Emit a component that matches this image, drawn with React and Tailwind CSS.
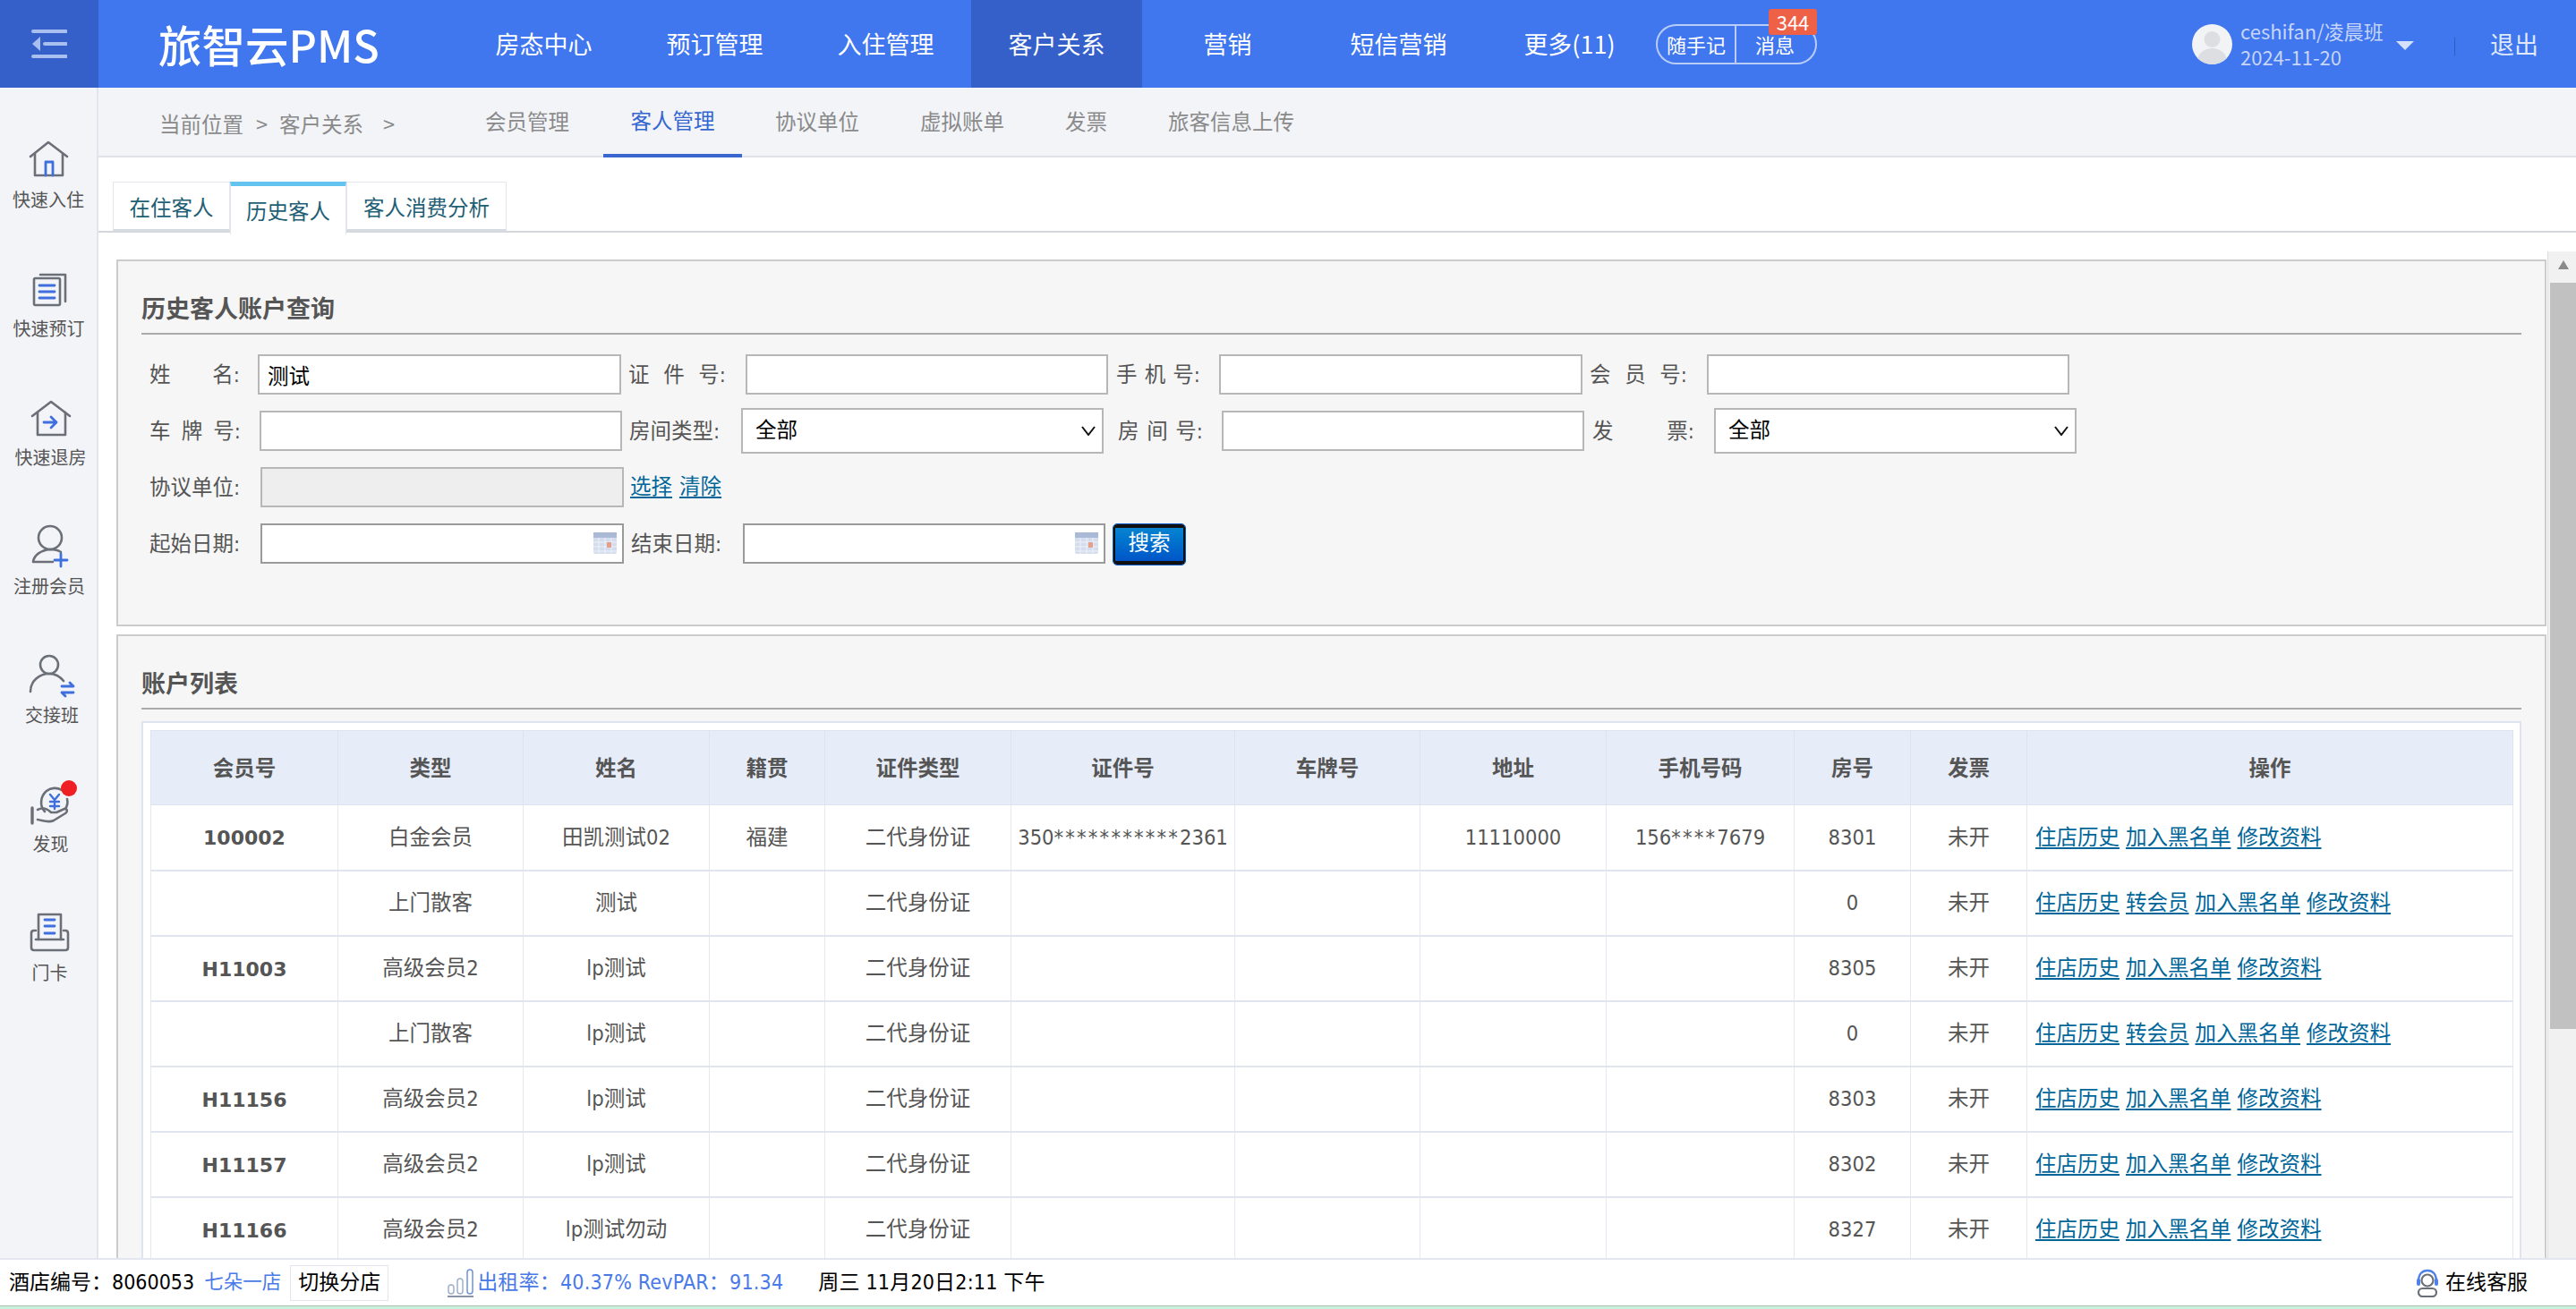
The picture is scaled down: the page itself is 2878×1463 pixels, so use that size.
import React from 'react';

const navItems = ['房态中心', '预订管理', '入住管理', '客户关系', '营销', '短信营销', '更多(11)'];

const stroke = { fill: 'none', stroke: '#6b7078', strokeWidth: 2.6, strokeLinejoin: 'round', strokeLinecap: 'round' };
const blue = { fill: 'none', stroke: '#3f6fdc', strokeWidth: 2.8, strokeLinecap: 'round', strokeLinejoin: 'round' };

const sideItems = [
  {
    label: '快速入住',
    labelClass: '',
    icon: (
      <>
        <path d="M8 25 L28 9 L49 25" {...stroke} />
        <path d="M13 22 V46 H44 V22" {...stroke} />
        <path d="M25 46 V31 H33 V46" {...blue} />
      </>
    ),
  },
  {
    label: '快速预订',
    labelClass: 'ml-[1px]',
    icon: (
      <>
        <path d="M19 13 H47 V43" {...stroke} />
        <rect x="12" y="17" width="29" height="30" rx="1.5" {...stroke} />
        <path d="M18 25 H35 M18 32 H35 M18 39 H35" {...blue} />
      </>
    ),
  },
  {
    label: '快速退房',
    labelClass: 'ml-[5px]',
    icon: (
      <>
        <path d="M10 27 L31 11 L52 27" {...stroke} />
        <path d="M16 23 V48 H47 V23" {...stroke} />
        <path d="M23 34 H37 M31 28 L37 34 L31 40" {...blue} />
      </>
    ),
  },
  {
    label: '注册会员',
    labelClass: 'ml-[2px]',
    icon: (
      <>
        <circle cx="30" cy="19" r="13" {...stroke} />
        <path d="M33 46 H11 C12 38 20 33 30 32 C35 32 39 33 42 35" {...stroke} />
        <path d="M42 37 V51 M35 44 H49" {...blue} />
      </>
    ),
  },
  {
    label: '交接班',
    labelClass: 'ml-[8px]',
    icon: (
      <>
        <circle cx="29" cy="17" r="10" {...stroke} />
        <path d="M8 47 C8 35 18 27 29 27 C35 27 41 30 45 35" {...stroke} />
        <path d="M43 41 H56 L52 37 M56 48 H43 L47 52" {...blue} />
      </>
    ),
  },
  {
    label: '发现',
    labelClass: 'ml-[5px]',
    icon: (
      <>
        <path d="M24 37 C18 31 19 20 26 14 C31 10 38 10 43 13 M49 23 C50 27 49 31 47 34" {...stroke} />
        <path d="M10 33 V50" {...stroke} strokeWidth="3.4" />
        <path d="M16 35 C22 32 27 34 31 38 H37 L46 34 C49 33 50 37 47 39 L34 47 C28 50 22 47 16 46" {...stroke} />
        <path d="M30 18 L35 24 L40 18 M30 26 H40 M30 31 H40 M35 24 V34" {...blue} strokeWidth="2.4" />
        <circle cx="51" cy="11" r="9" fill="#ee2024" />
      </>
    ),
  },
  {
    label: '门卡',
    labelClass: 'ml-[3px]',
    icon: (
      <>
        <path d="M17 36 V8 H42 V36" {...stroke} />
        <path d="M14 26 H12 C10 26 9 27 9 29 V45 C9 47 10 48 12 48 H47 C49 48 50 47 50 45 V29 C50 27 49 26 47 26 H45" {...stroke} />
        <path d="M14 36 H45" {...stroke} />
        <path d="M24 14 H35 M24 21 H35 M24 29 H35" {...blue} />
      </>
    ),
  },
];

const rows = [
  ['100002', '白金会员', '田凯测试02', '福建', '二代身份证', '350***********2361', '', '11110000', '156****7679', '8301', '未开', false],
  ['', '上门散客', '测试', '', '二代身份证', '', '', '', '', '0', '未开', true],
  ['H11003', '高级会员2', 'lp测试', '', '二代身份证', '', '', '', '', '8305', '未开', false],
  ['', '上门散客', 'lp测试', '', '二代身份证', '', '', '', '', '0', '未开', true],
  ['H11156', '高级会员2', 'lp测试', '', '二代身份证', '', '', '', '', '8303', '未开', false],
  ['H11157', '高级会员2', 'lp测试', '', '二代身份证', '', '', '', '', '8302', '未开', false],
  ['H11166', '高级会员2', 'lp测试勿动', '', '二代身份证', '', '', '', '', '8327', '未开', false],
];

const headers = ['会员号', '类型', '姓名', '籍贯', '证件类型', '证件号', '车牌号', '地址', '手机号码', '房号', '发票', '操作'];
const colWidths = [209, 207, 208, 129, 208, 250, 207, 208, 210, 130, 130, 543];

function Label({ parts, className }) {
  return (
    <div className={`flex justify-between shrink-0 pt-[2px] text-[23.5px] text-[#555] ${className}`}>
      {parts.map((p, i) => (
        <span key={i}>{p}</span>
      ))}
    </div>
  );
}

function TextInput({ className, value = '', disabled }) {
  return (
    <input
      readOnly
      disabled={disabled}
      value={value}
      className={`shrink-0 h-[45px] px-[9px] text-[23.5px] text-black border-2 border-[#b7b7b7] outline-none ${disabled ? 'bg-[#eeeeee]' : 'bg-white'} ${className}`}
    />
  );
}

function SelectBox({ className }) {
  return (
    <div className={`relative shrink-0 h-[51px] ${className}`}>
      <select className="w-full h-full appearance-none pl-[14px] text-[23.5px] text-black bg-white border-2 border-[#b7b7b7] rounded-none">
        <option>全部</option>
      </select>
      <svg viewBox="0 0 16 11" className="absolute right-[9px] top-[20px] w-[16px] h-[11px] pointer-events-none">
        <path d="M1 1 L8 10 L15 1" fill="none" stroke="#111" strokeWidth="2" />
      </svg>
    </div>
  );
}

function CalendarIcon() {
  return (
    <svg viewBox="0 0 26 24" className="absolute right-[8px] top-[10px] w-[26px] h-[24px]">
      <rect x="0" y="0" width="26" height="24" rx="2" fill="#d3dded" />
      <rect x="0" y="0" width="26" height="6" fill="#a9b9d6" />
      <path d="M0 11 H26 M0 16 H26 M0 21 H26 M6 6 V24 M13 6 V24 M20 6 V24" stroke="#eef2f8" strokeWidth="1" />
      <rect x="15" y="11" width="5" height="6" fill="#e5a08c" />
    </svg>
  );
}

function DateInput({ className }) {
  return (
    <div className={`relative shrink-0 ${className}`}>
      <input readOnly className="w-full h-[45px] bg-white border-2 border-[#9a9a9a] outline-none" />
      <CalendarIcon />
    </div>
  );
}

function PanelTitle({ children }) {
  return (
    <div className="h-[82px] flex items-end border-b-2 border-[#aaaaaa] pb-[8px]">
      <h2 className="text-[27px] leading-[36px] font-bold text-[#555]">{children}</h2>
    </div>
  );
}

function OpLink({ children }) {
  return (
    <a className="text-[#006699] underline decoration-2 underline-offset-[3px] cursor-pointer">{children}</a>
  );
}

// the masked ids show wider asterisks than the fallback font has
function Masked({ value }) {
  const parts = value.split(/(\*+)/);
  return parts.map((p, i) =>
    p.startsWith('*') ? <span key={i} className="tracking-[2.2px]">{p}</span> : <span key={i}>{p}</span>
  );
}

export default function App() {
  return (
    <div className="w-full h-[1463px] overflow-hidden flex flex-col bg-white [font-family:'DejaVu_Sans_Condensed','Noto_Sans_CJK_SC',sans-serif]">
      {/* top bar */}
      <header className="h-[98px] shrink-0 flex items-stretch bg-[#4076ee] [font-family:'Noto_Sans_CJK_SC',sans-serif]">
        <div className="w-[110px] shrink-0 bg-[#3560c9] flex items-center justify-center">
          <svg viewBox="0 0 40 32" className="w-[40px] h-[32px]">
            <path d="M2 2 H39 M15 16 H39 M2 30 H39" stroke="#a9bff0" strokeWidth="4" strokeLinecap="round" />
            <path d="M1 16 L10 8 V24 Z" fill="#a9bff0" />
          </svg>
        </div>
        <div className="w-[402px] shrink-0 flex items-center pl-[67px] text-white text-[48.5px] leading-none font-medium">旅智云PMS</div>
        {navItems.map((item, i) => (
          <div key={item} className={`w-[191px] shrink-0 flex items-center justify-center text-white text-[27px] ${i === 3 ? 'bg-[#3560c9]' : ''}`}>
            {item}
          </div>
        ))}
        <div className="flex items-center ml-[1px]">
          <div className="relative flex w-[180px] h-[45px] rounded-full border-2 border-[#b9cdf8] text-white text-[22px]">
            <div className="w-[88px] flex items-center justify-center border-r-2 border-[#b9cdf8]">随手记</div>
            <div className="flex-1 flex items-center justify-center pr-[2px]">消息</div>
            <span className="absolute right-[-2px] top-[-19px] w-[54px] h-[29px] rounded-[3px] bg-[#ee6146] text-white text-[22px] leading-[29px] text-center">344</span>
          </div>
        </div>
        <div className="flex items-center ml-[419px]">
          <div className="w-[45px] h-[45px] rounded-full bg-[#f2f3f5] overflow-hidden flex items-center justify-center">
            <svg viewBox="0 0 45 45" className="w-[45px] h-[45px]">
              <circle cx="22.5" cy="17" r="9" fill="#dcdee2" />
              <ellipse cx="22.5" cy="40" rx="16" ry="13" fill="#dcdee2" />
            </svg>
          </div>
          <div className="ml-[9px] w-[174px] text-[22px] leading-[29px] text-[#c6d5f9]">
            <div>ceshifan/凌晨班</div>
            <div>2024-11-20</div>
          </div>
          <svg viewBox="0 0 20 10" className="w-[20px] h-[10px] mt-[4px]">
            <path d="M0 0 H20 L10 10 Z" fill="#d5e0fb" />
          </svg>
          <div className="ml-[45px] w-[1px] h-[20px] mt-[6px] bg-[#2f5cc0]" />
          <div className="ml-[39px] text-[27px] text-[#dfe8fc]">退出</div>
        </div>
      </header>

      <div className="flex-1 min-h-0 flex">
        {/* left quick menu */}
        <aside className="w-[110px] shrink-0 bg-[#f2f4f8] border-r-2 border-[#e3e5ee] pt-[52px] [font-family:'Noto_Sans_CJK_SC',sans-serif]">
          {sideItems.map((item) => (
            <div key={item.label} className="h-[144px] flex flex-col items-center">
              <svg viewBox="0 0 60 56" className="w-[60px] h-[56px] shrink-0 ml-[4px]">
                {item.icon}
              </svg>
              <div className={`mt-[4px] text-[20px] leading-[26px] text-[#555] ${item.labelClass}`}>{item.label}</div>
            </div>
          ))}
        </aside>

        <main className="flex-1 min-w-0 flex flex-col">
          {/* breadcrumb + sub nav */}
          <div className="h-[78px] shrink-0 bg-[#f2f4f8] border-b-2 border-[#dfe2e8] flex items-stretch pl-[68px] text-[23.5px] text-[#8a8a8a] [font-family:'Noto_Sans_CJK_SC',sans-serif]">
            <div className="w-[330px] shrink-0 flex items-center pt-[5px]">
              <span>当前位置</span>
              <span className="ml-[14px]">&gt;</span>
              <span className="ml-[13px]">客户关系</span>
              <span className="ml-[22px]">&gt;</span>
            </div>
            <div className="flex items-center pb-[1px] w-[162px] justify-center">会员管理</div>
            <div className="flex items-center pb-[1px] w-[155px] justify-center text-[#3566d0] border-b-[4px] border-[#3a66cf] mb-[-2px] mr-[3px] ml-[4px]">客人管理</div>
            <div className="flex items-center pb-[1px] w-[162px] justify-center">协议单位</div>
            <div className="flex items-center pb-[1px] w-[162px] justify-center">虚拟账单</div>
            <div className="flex items-center pb-[1px] w-[115px] justify-center">发票</div>
            <div className="flex items-center pb-[1px] w-[209px] justify-center">旅客信息上传</div>
          </div>

          {/* page tabs */}
          <div className="h-[84px] shrink-0 flex items-start pt-[27px] pl-[16px] border-b-2 border-[#d3d6da] text-[23.5px] text-[#1f5f75] [font-family:'Noto_Sans_CJK_SC',sans-serif]">
            <div className="w-[131px] h-[56px] flex items-center justify-center pt-[3px] bg-white border border-[#e3e6ea] border-b-[3px] border-b-[#d5dbe0]">在住客人</div>
            <div className="w-[130px] h-[59px] flex items-center justify-center bg-white border-t-[5px] border-t-[#63c4f0] border-x border-x-[#e3e6ea] pt-[1px] relative z-10">历史客人</div>
            <div className="w-[179px] h-[56px] flex items-center justify-center pt-[3px] bg-white border border-[#e3e6ea] border-b-[3px] border-b-[#d5dbe0]">客人消费分析</div>
          </div>

          <div className="flex-1 min-h-0 flex overflow-hidden">
            <div className="flex-1 min-w-0 pl-[20px] pr-[1px] pt-[30px]">
              {/* search panel */}
              <section className="h-[410px] bg-[#f6f6f6] border-2 border-[#cccccc] px-[26px]">
                <PanelTitle>历史客人账户查询</PanelTitle>
                <div className="pt-[13px]">
                  <div className="h-[63px] flex items-center">
                    <Label parts={['姓', '名:']} className="ml-[9px] w-[101px]" />
                    <TextInput value="测试" className="ml-[20px] w-[406px]" />
                    <Label parts={['证', '件', '号:']} className="ml-[8px] w-[109px]" />
                    <TextInput className="ml-[22px] w-[405px]" />
                    <Label parts={['手', '机', '号:']} className="ml-[9px] w-[94px]" />
                    <TextInput className="ml-[21px] w-[406px]" />
                    <Label parts={['会', '员', '号:']} className="ml-[8px] w-[109px]" />
                    <TextInput className="ml-[22px] w-[405px]" />
                  </div>
                  <div className="h-[63px] flex items-center">
                    <Label parts={['车', '牌', '号:']} className="ml-[9px] w-[102px]" />
                    <TextInput className="ml-[21px] w-[405px]" />
                    <Label parts={['房间类型:']} className="ml-[8px] w-[104px]" />
                    <SelectBox className="ml-[21px] w-[405px]" />
                    <Label parts={['房', '间', '号:']} className="ml-[16px] w-[95px]" />
                    <TextInput className="ml-[21px] w-[405px]" />
                    <Label parts={['发', '票:']} className="ml-[9px] w-[114px]" />
                    <SelectBox className="ml-[22px] w-[405px]" />
                  </div>
                  <div className="h-[63px] flex items-center">
                    <Label parts={['协议单位:']} className="ml-[9px] w-[103px]" />
                    <TextInput disabled className="ml-[21px] w-[406px]" />
                    <a className="ml-[7px] text-[23.5px] text-[#006699] underline decoration-2 underline-offset-[3px]">选择</a>
                    <a className="ml-[8px] text-[23.5px] text-[#006699] underline decoration-2 underline-offset-[3px]">清除</a>
                  </div>
                  <div className="h-[63px] flex items-center">
                    <Label parts={['起始日期:']} className="ml-[9px] w-[103px]" />
                    <DateInput className="ml-[21px] w-[406px]" />
                    <Label parts={['结束日期:']} className="ml-[8px] w-[103px]" />
                    <DateInput className="ml-[22px] w-[405px]" />
                    <button className="ml-[9px] w-[80px] h-[45px] mt-[1px] rounded-[4px] border-x-2 border-y-[4px] border-[#111] outline outline-1 outline-[#0a57c8] bg-gradient-to-b from-[#0a84d0] to-[#0055c8] text-white text-[23.5px] leading-none">
                      搜索
                    </button>
                  </div>
                </div>
              </section>

              {/* account list */}
              <section className="mt-[9px] h-[760px] bg-[#f6f6f6] border-2 border-b-0 border-[#cccccc] px-[26px]">
                <PanelTitle>账户列表</PanelTitle>
                <div className="mt-[13px] bg-white border-2 border-[#dfe5f0] px-[8px] pt-[8px]">
                  <table className="table-fixed border-collapse w-[2639px] text-[23.5px] text-[#555] text-center">
                    <colgroup>
                      {colWidths.map((w, i) => (
                        <col key={i} style={{ width: w }} />
                      ))}
                    </colgroup>
                    <thead>
                      <tr className="h-[83px] bg-[#e6ecf8]">
                        {headers.map((h) => (
                          <th key={h} className="font-bold pt-[3px] border border-[#dde3ef]">{h}</th>
                        ))}
                      </tr>
                    </thead>
                    <tbody>
                      {rows.map((r, idx) => (
                        <tr key={idx} className="h-[73px] border-b-2 border-[#dfe4ef]">
                          <td className="border-x border-[#e4e8f0] pt-[2px] font-bold text-[22px] [font-family:'DejaVu_Sans','Noto_Sans_CJK_SC',sans-serif]">{r[0]}</td>
                          {r.slice(1, 11).map((c, i) => (
                            <td key={i} className="border-x border-[#e4e8f0] pt-[2px] whitespace-nowrap">
                              <Masked value={c} />
                            </td>
                          ))}
                          <td className="border-x border-[#e4e8f0] pt-[2px] text-left pl-[9px]">
                            <div className="flex gap-[7px]">
                              <OpLink>住店历史</OpLink>
                              {r[11] && <OpLink>转会员</OpLink>}
                              <OpLink>加入黑名单</OpLink>
                              <OpLink>修改资料</OpLink>
                            </div>
                          </td>
                        </tr>
                      ))}
                    </tbody>
                  </table>
                </div>
              </section>
            </div>

            {/* page scrollbar */}
            <div className="w-[32px] shrink-0 mt-[21px] bg-[#f1f1f1] pl-[2px] border-l border-[#dddddd]">
              <div className="h-[35px] flex justify-center pt-[10px]">
                <svg viewBox="0 0 12 10" className="w-[12px] h-[10px]">
                  <path d="M6 0 L12 10 H0 Z" fill="#8a8a8a" />
                </svg>
              </div>
              <div className="h-[834px] bg-[#c1c1c1]" />
            </div>
          </div>
        </main>
      </div>

      {/* status bar */}
      <footer className="h-[53px] shrink-0 flex items-center bg-white border-t-2 border-[#e3e6ee] pl-[10px] pr-[54px] text-[23px] text-black relative z-20">
        <span>酒店编号：8060053</span>
        <span className="ml-[11px] text-[21.5px] text-[#4a7ae8]">七朵一店</span>
        <span className="ml-[10px] w-[110px] h-[40px] flex items-center justify-center border border-[#e4e6ee]">切换分店</span>
        <svg viewBox="0 0 31 32" className="ml-[65px] w-[31px] h-[32px]">
          <rect x="2" y="18" width="6" height="10" rx="3" fill="none" stroke="#9fb0c8" strokeWidth="1.5" />
          <rect x="12" y="11" width="6" height="17" rx="3" fill="none" stroke="#9fb0c8" strokeWidth="1.5" />
          <rect x="23" y="1" width="6" height="27" rx="3" fill="none" stroke="#6f93d8" strokeWidth="1.5" />
          <path d="M1 31 H30" stroke="#8a94a6" strokeWidth="2" />
        </svg>
        <span className="ml-[3px] text-[#4a7ae8] whitespace-pre tracking-[0.2px]">出租率：40.37% RevPAR：91.34</span>
        <span className="ml-[39px] tracking-[0.2px]">周三 11月20日2:11 下午</span>
        <span className="ml-auto flex items-center">
          <svg viewBox="0 0 26 32" className="w-[26px] h-[32px] mr-[7px]">
            <path d="M3 14 C3 6 7 2 13 2 C19 2 23 6 23 14" fill="none" stroke="#4f7fe8" strokeWidth="2.4" />
            <rect x="1" y="11" width="4" height="8" rx="2" fill="#4f7fe8" />
            <rect x="21" y="11" width="4" height="8" rx="2" fill="#4f7fe8" />
            <circle cx="13" cy="13" r="6.5" fill="none" stroke="#6b7078" strokeWidth="2.2" />
            <rect x="3" y="22" width="20" height="9" rx="4.5" fill="none" stroke="#6b7078" strokeWidth="2.2" />
          </svg>
          在线客服
        </span>
      </footer>
      <div className="h-[4px] shrink-0 bg-[#c8f2dc] border-t border-[#a9c0b0]" />
    </div>
  );
}
